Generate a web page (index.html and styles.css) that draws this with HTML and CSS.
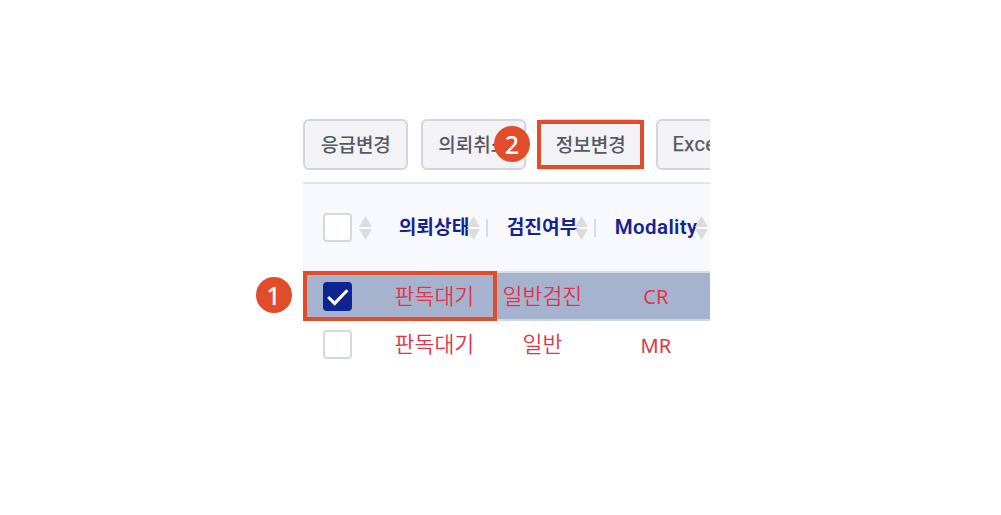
FILE: index.html
```html
<!DOCTYPE html>
<html lang="ko">
<head>
<meta charset="utf-8">
<title>판독 의뢰 목록</title>
<link rel="stylesheet" href="styles.css">
</head>
<body>
<main class="stage">
  <section class="panel">
    <div class="toolbar">
      <button class="btn">응급변경</button>
      <button class="btn">의뢰취소</button>
      <button class="btn">정보변경</button>
      <button class="btn btn-excel">Excel</button>
    </div>
    <div class="table">
      <div class="row head">
        <div class="cell select"><span class="box"></span><svg class="sort" viewBox="0 0 13 24"><path d="M6.5 0L13 11H0zM0 13h13L6.5 24z"/></svg></div>
        <div class="cell title divided"><span class="label">의뢰상태</span><svg class="sort" viewBox="0 0 13 24"><path d="M6.5 0L13 11H0zM0 13h13L6.5 24z"/></svg></div>
        <div class="cell title divided"><span class="label">검진여부</span><svg class="sort" viewBox="0 0 13 24"><path d="M6.5 0L13 11H0zM0 13h13L6.5 24z"/></svg></div>
        <div class="cell title"><span class="label latin">Modality</span><svg class="sort" viewBox="0 0 13 24"><path d="M6.5 0L13 11H0zM0 13h13L6.5 24z"/></svg></div>
      </div>
      <div class="row item selected">
        <div class="cell select"><span class="box checked"><svg viewBox="0 0 28 28"><path d="M5 14.5l6.2 6.2L23.5 8"/></svg></span></div>
        <div class="cell value">판독대기</div>
        <div class="cell value">일반검진</div>
        <div class="cell value modality">CR</div>
      </div>
      <div class="row item">
        <div class="cell select"><span class="box"></span></div>
        <div class="cell value">판독대기</div>
        <div class="cell value">일반</div>
        <div class="cell value modality">MR</div>
      </div>
    </div>
  </section>
  <div class="outline outline-row"></div>
  <div class="outline outline-button"></div>
  <div class="badge badge-one">1</div>
  <div class="badge badge-two">2</div>
</main>
</body>
</html>
```
FILE: styles.css
```css
* { box-sizing: border-box; }
body { margin: 0; background: #fff; font-family: "Noto Sans CJK KR", sans-serif; }
.stage { position: relative; width: 1001px; height: 515px; padding: 119px 0 0 303.4px; overflow: hidden; }
.panel { width: 406.6px; overflow: hidden; }
.toolbar { display: flex; gap: 12.4px; height: 63px; }
.btn { flex: none; width: 105px; height: 51px; padding: 0 0 3px; border: 2px solid #d1d6d9; border-radius: 6px; background: #f2f2f7; color: #555861; font: 500 19px/1 "Noto Sans CJK KR", sans-serif; }
.btn-excel { padding: 0 0 1px 15px; font: 400 20px/1 Roboto, sans-serif; letter-spacing: .4px; text-align: left; -webkit-text-stroke: .25px currentColor; }
.table { border-top: 2px solid #e0e5ea; }
.row { display: grid; grid-template-columns: 77px 108px 108px 114px; }
.cell { display: flex; align-items: center; position: relative; }
.head { height: 89px; background: #f8f9ff; border-bottom: 2px solid #d9dee3; }
.select { padding-left: 20px; gap: 6.5px; }
.box { flex: none; width: 29px; height: 29px; border: 2px solid #d4dadc; border-radius: 4px; background: #fff; }
.checked { border: 0; background: #102393; }
.checked svg { display: block; width: 29px; height: 29px; fill: none; stroke: #fff; stroke-width: 3; }
.sort { flex: none; width: 13px; height: 24px; fill: #dcdcdc; }
.title { padding-left: 18.3px; color: #16238f; }
.label { flex: none; padding-bottom: 3px; font-weight: 700; font-size: 19.2px; line-height: 28px; }
.latin { padding-bottom: 1px; font: 600 20.5px/28px Roboto, sans-serif; letter-spacing: .4px; }
.title .sort { margin-left: -2.3px; }
.title:last-child .sort { margin-left: -3px; }
.divided::after { content: ""; position: absolute; right: 0; top: 35px; width: 2px; height: 18px; background: #d7dbe3; }
.item { height: 49px; border-bottom: 2px solid #fff; }
.selected { height: 48px; border-bottom-color: #d3d8df; background: #a6b3ce; }
.value { padding-bottom: 4px; justify-content: center; color: #e03449; font-size: 21.7px; font-weight: 350; }
.modality { padding: 2px 0 0 5px; font: 400 20px/1 "Noto Sans", sans-serif; }
.outline { position: absolute; border: 4px solid #e14d2a; }
.outline-row { left: 303px; top: 271px; width: 194px; height: 50px; }
.outline-button { left: 537px; top: 120px; width: 107px; height: 49px; }
.badge { position: absolute; width: 36px; height: 36px; border-radius: 50%; background: #e14d2a; color: #fff; font: 500 25px/36px "Noto Sans", sans-serif; text-align: center; }
.badge-one { left: 255.5px; top: 277px; }
.badge-two { left: 494px; top: 126px; }
```
